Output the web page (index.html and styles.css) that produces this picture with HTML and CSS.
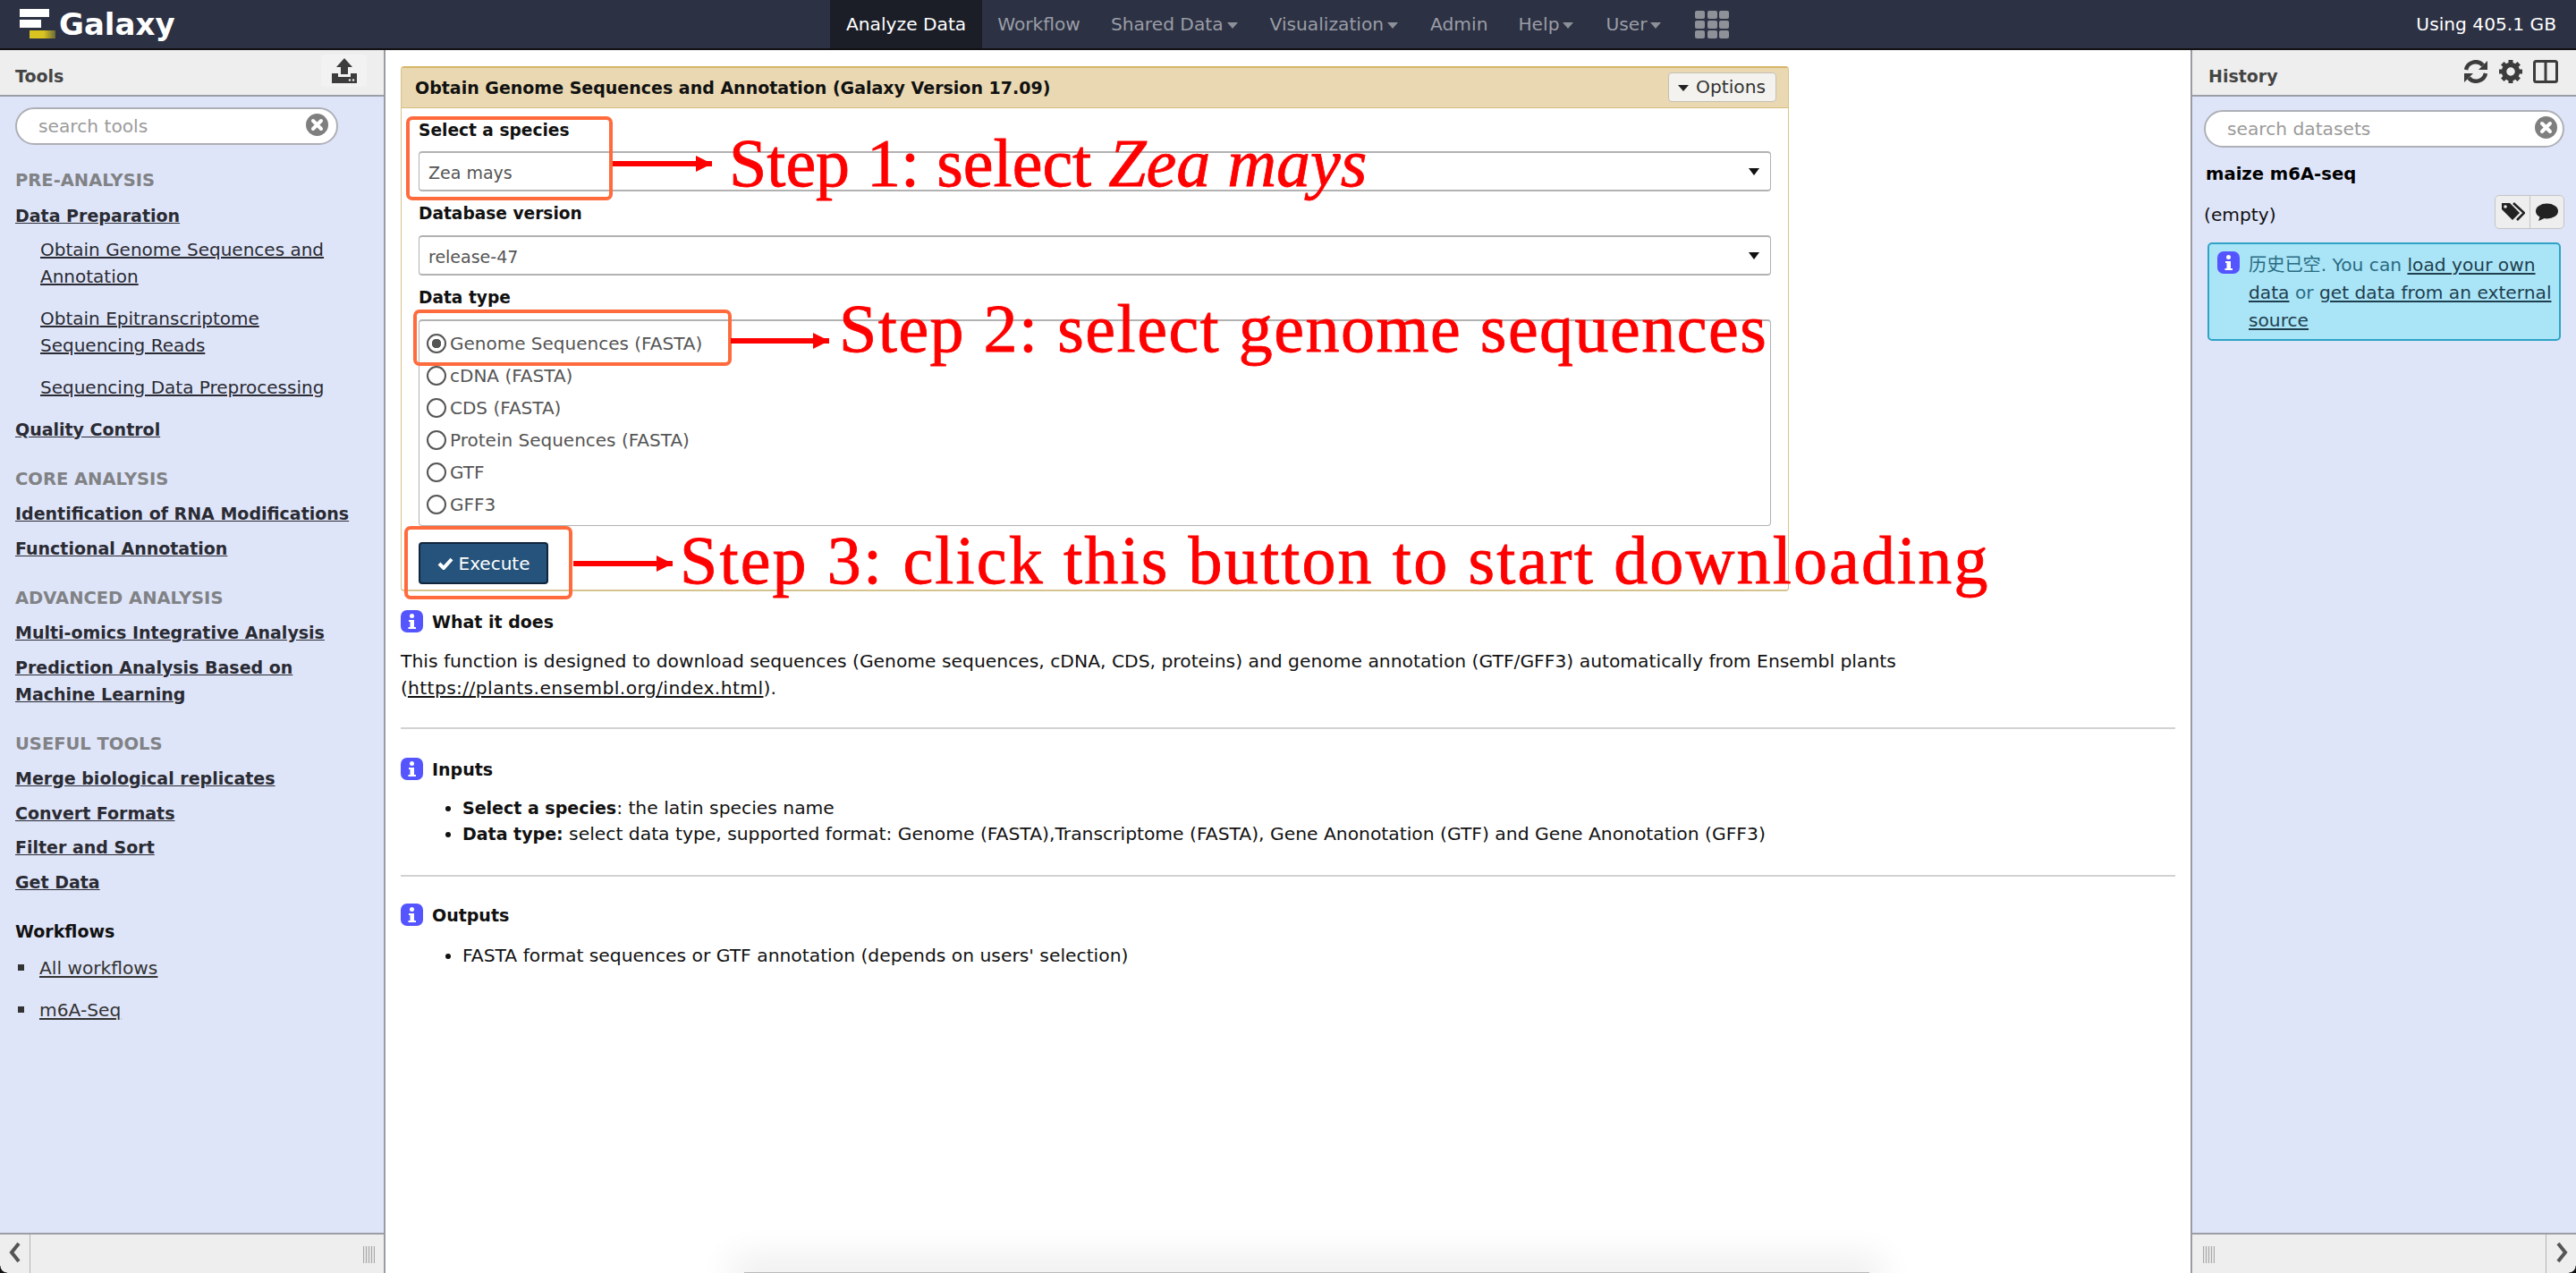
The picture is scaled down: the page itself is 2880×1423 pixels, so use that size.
FILE: index.html
```html
<!DOCTYPE html>
<html lang="en">
<head>
<meta charset="utf-8">
<title>Galaxy</title>
<link rel="stylesheet" href="styles.css">
</head>
<body>
<header class="masthead">
  <a class="brand">
    <span class="logo"><i class="bar b1"></i><i class="bar b2"></i><i class="bar b3"></i></span>
    <span class="brand-name">Galaxy</span>
  </a>
  <nav class="nav">
    <a class="tab active">Analyze Data</a>
    <a class="tab">Workflow</a>
    <a class="tab">Shared Data<i class="caret"></i></a>
    <a class="tab">Visualization<i class="caret"></i></a>
    <a class="tab">Admin</a>
    <a class="tab">Help<i class="caret"></i></a>
    <a class="tab">User<i class="caret"></i></a>
    <span class="apps"><i></i><i></i><i></i><i></i><i></i><i></i><i></i><i></i><i></i></span>
  </nav>
  <div class="quota">Using 405.1 GB</div>
</header>

<main class="layout">
  <aside class="panel panel-left">
    <div class="panel-head">
      <span class="panel-title">Tools</span>
      <span class="upload-btn">
        <svg width="30" height="28" viewBox="0 0 30 28"><path d="M15 0 L24 10 H19 V18 H11 V10 H6 Z M1 17 H8 V21 H22 V17 H29 Q29 17 29 19 V28 H1 Z" fill="#3c3c3c"/><circle cx="21" cy="24.5" r="1.2" fill="#eee"/><circle cx="25" cy="24.5" r="1.2" fill="#eee"/></svg>
      </span>
    </div>
    <div class="panel-body tools">
      <div class="search search-tools"><span>search tools</span>
        <svg class="clear" width="25" height="25" viewBox="0 0 25 25"><circle cx="12.5" cy="12.5" r="12.5" fill="#7f7f7f"/><path d="M8 8 L17 17 M17 8 L8 17" stroke="#fff" stroke-width="4" stroke-linecap="round"/></svg>
      </div>
      <h3 class="label first">PRE-ANALYSIS</h3>
      <a class="section">Data Preparation</a>
      <div class="subs">
        <a class="sub">Obtain Genome Sequences and Annotation</a>
        <a class="sub">Obtain Epitranscriptome Sequencing Reads</a>
        <a class="sub">Sequencing Data Preprocessing</a>
      </div>
      <a class="section">Quality Control</a>
      <h3 class="label">CORE ANALYSIS</h3>
      <a class="section">Identification of RNA Modifications</a>
      <a class="section">Functional Annotation</a>
      <h3 class="label">ADVANCED ANALYSIS</h3>
      <a class="section">Multi-omics Integrative Analysis</a>
      <a class="section">Prediction Analysis Based on Machine Learning</a>
      <h3 class="label">USEFUL TOOLS</h3>
      <a class="section">Merge biological replicates</a>
      <a class="section">Convert Formats</a>
      <a class="section">Filter and Sort</a>
      <a class="section">Get Data</a>
      <h3 class="label workflows">Workflows</h3>
      <ul class="wf">
        <li><a>All workflows</a></li>
        <li><a>m6A-Seq</a></li>
      </ul>
    </div>
    <div class="panel-foot">
      <span class="collapse collapse-l"><svg width="14" height="24" viewBox="0 0 14 24"><path d="M11 2 L3 12 L11 22" fill="none" stroke="#555" stroke-width="4"/></svg></span>
      <span class="grip"></span>
    </div>
  </aside>

  <section class="center">
    <div class="form">
      <div class="form-head">
        <span class="form-title">Obtain Genome Sequences and Annotation (Galaxy Version 17.09)</span>
        <span class="options"><i class="caret dark"></i>Options</span>
      </div>
      <div class="form-body">
        <div class="field-label">Select a species</div>
        <div class="select first-select"><span>Zea mays</span><i class="sel-arrow"></i></div>
        <div class="field-label">Database version</div>
        <div class="select"><span>release-47</span><i class="sel-arrow"></i></div>
        <div class="field-label">Data type</div>
        <div class="radios">
          <div class="radio on"><i></i>Genome Sequences (FASTA)</div>
          <div class="radio"><i></i>cDNA (FASTA)</div>
          <div class="radio"><i></i>CDS (FASTA)</div>
          <div class="radio"><i></i>Protein Sequences (FASTA)</div>
          <div class="radio"><i></i>GTF</div>
          <div class="radio"><i></i>GFF3</div>
        </div>
        <div class="execute">
          <svg width="18" height="15" viewBox="0 0 18 15"><path d="M2 8 L7 13 L16 3" fill="none" stroke="#fff" stroke-width="4"/></svg>Execute
        </div>
      </div>
    </div>

    <div class="help">
      <h4 class="help-h"><svg class="info" viewBox="0 0 25 25"><rect width="25" height="25" rx="7" fill="#5555ff"/><circle cx="12.5" cy="6.5" r="2.5" fill="#fff"/><path d="M9 11 H15 V19 H17 V21 H8.500 V19 H10.500 V13 H9 Z" fill="#fff"/></svg>What it does</h4>
      <p class="help-p">This function is designed to download sequences (Genome sequences, cDNA, CDS, proteins) and genome annotation (GTF/GFF3) automatically from Ensembl plants<br>(<a>https://plants.ensembl.org/index.html</a>).</p>
      <hr class="rule rule-a">
      <h4 class="help-h h-inputs"><svg class="info" viewBox="0 0 25 25"><rect width="25" height="25" rx="7" fill="#5555ff"/><circle cx="12.5" cy="6.5" r="2.5" fill="#fff"/><path d="M9 11 H15 V19 H17 V21 H8.500 V19 H10.500 V13 H9 Z" fill="#fff"/></svg>Inputs</h4>
      <ul class="help-ul ul-inputs">
        <li><b>Select a species</b>: the latin species name</li>
        <li><b>Data type:</b> select data type, supported format: Genome (FASTA),Transcriptome (FASTA), Gene Anonotation (GTF) and Gene Anonotation (GFF3)</li>
      </ul>
      <hr class="rule rule-b">
      <h4 class="help-h h-outputs"><svg class="info" viewBox="0 0 25 25"><rect width="25" height="25" rx="7" fill="#5555ff"/><circle cx="12.5" cy="6.5" r="2.5" fill="#fff"/><path d="M9 11 H15 V19 H17 V21 H8.500 V19 H10.500 V13 H9 Z" fill="#fff"/></svg>Outputs</h4>
      <ul class="help-ul ul-outputs">
        <li>FASTA format sequences or GTF annotation (depends on users' selection)</li>
      </ul>
    </div>

    <div class="bottom-shadow"></div>

    <div class="mark box1"></div>
    <div class="mark box2"></div>
    <div class="mark box3"></div>
    <div class="arrow a1"></div>
    <div class="arrow a2"></div>
    <div class="arrow a3"></div>
    <div class="step s1">Step 1: select <em>Zea mays</em></div>
    <div class="step s2">Step 2: select genome sequences</div>
    <div class="step s3">Step 3: click this button to start downloading</div>
  </section>

  <aside class="panel panel-right">
    <div class="panel-head">
      <span class="panel-title">History</span>
      <span class="head-icons">
        <svg width="28" height="26" viewBox="0 0 28 26"><path d="M3 11 A11 11 0 0 1 22 6" fill="none" stroke="#3c3c3c" stroke-width="4.500"/><path d="M27 1 V11 H17 Z" fill="#3c3c3c"/><path d="M25 15 A11 11 0 0 1 6 20" fill="none" stroke="#3c3c3c" stroke-width="4.500"/><path d="M1 25 V15 H11 Z" fill="#3c3c3c"/></svg>
        <svg width="26" height="26" viewBox="0 0 26 26"><circle cx="13" cy="13" r="7.500" fill="none" stroke="#3c3c3c" stroke-width="5.500"/><path d="M13 0 V26 M0 13 H26 M3.800 3.800 L22.200 22.200 M22.200 3.800 L3.800 22.200" stroke="#3c3c3c" stroke-width="5" stroke-dasharray="5 16 5"/></svg>
        <svg width="28" height="26" viewBox="0 0 28 26"><rect x="1.500" y="1.500" width="25" height="23" rx="2" fill="none" stroke="#3c3c3c" stroke-width="3"/><path d="M14 1 V25" stroke="#3c3c3c" stroke-width="3"/></svg>
      </span>
    </div>
    <div class="panel-body history">
      <div class="search search-hist"><span>search datasets</span>
        <svg class="clear" width="25" height="25" viewBox="0 0 25 25"><circle cx="12.5" cy="12.5" r="12.5" fill="#7f7f7f"/><path d="M8 8 L17 17 M17 8 L8 17" stroke="#fff" stroke-width="4" stroke-linecap="round"/></svg>
      </div>
      <div class="hist-name">maize m6A-seq</div>
      <div class="hist-row">
        <span class="hist-empty">(empty)</span>
        <span class="btn-group">
          <span class="gbtn"><svg width="27" height="22" viewBox="0 0 27 22"><path d="M1 1 H10 L21 12 L13 20 L1 8 Z" fill="#222"/><path d="M14 1 L26 12 L18 20" fill="none" stroke="#222" stroke-width="2.500"/><circle cx="5" cy="5" r="1.800" fill="#eee"/></svg></span>
          <span class="gbtn"><svg width="25" height="21" viewBox="0 0 25 21"><ellipse cx="12.500" cy="9" rx="12.500" ry="8.500" fill="#222"/><path d="M5 14 L3 20 L12 16 Z" fill="#222"/></svg></span>
        </span>
      </div>
      <div class="message">
        <svg class="info" viewBox="0 0 25 25"><rect width="25" height="25" rx="7" fill="#5555ff"/><circle cx="12.5" cy="6.5" r="2.5" fill="#fff"/><path d="M9 11 H15 V19 H17 V21 H8.500 V19 H10.500 V13 H9 Z" fill="#fff"/></svg>
        <p>历史已空. You can <a>load your own data</a> or <a>get data from an external source</a></p>
      </div>
    </div>
    <div class="panel-foot foot-right">
      <span class="grip"></span>
      <span class="collapse collapse-r"><svg width="14" height="24" viewBox="0 0 14 24"><path d="M3 2 L11 12 L3 22" fill="none" stroke="#555" stroke-width="4"/></svg></span>
    </div>
  </aside>
</main>
<i class="corner corner-l"></i>
<i class="corner corner-r"></i>
</body>
</html>
```

FILE: styles.css
```css
* { box-sizing: border-box; }
html, body { margin: 0; height: 100%; overflow: hidden; }
body {
  display: flex;
  flex-direction: column;
  position: relative;
  font-family: "DejaVu Sans", "Noto Sans CJK SC", sans-serif;
  font-size: 20.2px;
  line-height: 30px;
  color: #111;
  background: #fff;
}
a { color: inherit; text-decoration: underline; }
i { font-style: normal; }

/* masthead */
.masthead {
  height: 56px;
  flex: none;
  background: #2c3143;
  border-bottom: 2px solid #111;
  display: flex;
  position: relative;
}
.brand { display: flex; align-items: center; padding-left: 22px; text-decoration: none; }
.logo { width: 44px; height: 34px; position: relative; display: block; }
.bar { position: absolute; display: block; height: 9px; }
.b1 { left: 0; top: 0; width: 33px; background: #fff; }
.b2 { left: 0; top: 12px; width: 24px; background: #fff; }
.b3 { left: 11px; top: 24px; width: 29px; background: linear-gradient(90deg, #d8c320 55%, #6a6a3a); }
.brand-name { font-size: 34px; font-weight: 700; color: #fff; line-height: 50px; }
.nav {
  position: absolute;
  left: 928px;
  top: 0;
  height: 54px;
  display: flex;
  align-items: center;
}
.tab {
  height: 54px;
  line-height: 52px;
  padding: 0 17px;
  color: #9a9da6;
  text-decoration: none;
  display: flex;
  align-items: center;
}
.tab.active { background: #1b1d27; color: #fff; padding: 0 18px; }
.caret {
  display: inline-block;
  width: 0; height: 0;
  margin: 3px 2px 0 4px;
  border-left: 6.5px solid transparent;
  border-right: 6.5px solid transparent;
  border-top: 7px solid #8e9099;
}
.caret.dark { border-top-color: #222; margin: 2px 8px 0 0; }
.apps {
  margin-left: 19px;
  display: grid;
  grid-template-columns: repeat(3, 11px);
  grid-auto-rows: 9px;
  gap: 2px 2.5px;
}
.apps i { background: #8f9199; border-radius: 2px; }
.quota { margin-left: auto; padding-right: 22px; color: #fff; line-height: 54px; }

/* layout */
.layout {
  flex: 1;
  min-height: 0;
  display: grid;
  grid-template-columns: 431px 1fr 431px;
}
.panel { display: flex; flex-direction: column; min-height: 0; background: #dfe5f9; }
.panel-left { border-right: 2px solid #9a9ca3; }
.panel-right { border-left: 2px solid #9a9ca3; }
.panel-head {
  height: 52px;
  flex: none;
  background: #eee;
  border-bottom: 2px solid #9c9ea5;
  display: flex;
  align-items: center;
  justify-content: space-between;
}
.panel-title { font-size: 19px; font-weight: 600; color: #444; line-height: 30px; margin-top: 8px; }
.panel-left .panel-title { margin-left: 17px; }
.panel-right .panel-title { margin-left: 18px; }
.upload-btn {
  width: 51px; height: 36px;
  margin-right: 19px; margin-top: -4px;
  background: #f2f2f2;
  border-radius: 4px;
  display: flex; align-items: center; justify-content: center;
}
.head-icons { display: flex; gap: 12px; margin-right: 20px; margin-top: -3px; }
.panel-body { flex: 1; min-height: 0; }
.panel-foot {
  height: 45px;
  flex: none;
  background: #eee;
  border-top: 2px solid #9c9ea5;
  display: flex;
  align-items: stretch;
  justify-content: space-between;
}
.collapse { width: 34px; display: flex; align-items: center; justify-content: center; padding-bottom: 4px; }
.collapse-l { border-right: 1px solid #b5b5b5; }
.collapse-r { border-left: 1px solid #b5b5b5; }
.grip {
  width: 13px; height: 19px;
  margin: 13px 10px 0 0;
  background: repeating-linear-gradient(90deg, #aaa 0 1px, #e4e4e4 1px 3px);
}
.foot-right .grip { margin: 13px 0 0 12px; }

/* search */
.search {
  height: 42px;
  background: #fff;
  border: 2px solid #aeb0b6;
  border-radius: 21px;
  color: #9b9b9b;
  display: flex;
  align-items: center;
  justify-content: space-between;
  line-height: 38px;
}
.search span { padding-left: 24px; }
.clear { margin-right: 9px; margin-top: -3px; }
.search-tools { width: 361px; margin: 12px 0 0 17px; }
.search-hist { margin: 15px 13px 0 13px; }
.search-hist .clear { margin-right: 6px; margin-top: -4px; }

/* tool list */
.tools { padding-left: 17px; }
.tools .search-tools { margin-left: 0; }
.label { margin: 26px 0 0; font-size: 19.5px; font-weight: 700; color: #808285; }
.label.first { margin-top: 25px; }
.section { display: block; font-size: 19px; font-weight: 700; color: #2a2b33; margin-top: 8.5px; padding-right: 20px; }
.subs { margin-bottom: 17px; }
.sub { display: block; margin: 8px 0 0 28px; color: #2a2b33; padding-right: 22px; font-size: 20px; }
.sub + .sub { margin-top: 17px; }
.label.workflows { font-size: 19px; color: #111; margin-top: 25px; }
.wf { margin: 11px 0 0; padding: 0; list-style: none; color: #333; }
.wf li { display: flex; align-items: center; }
.wf li::before { content: ""; width: 7px; height: 7px; margin: 0 17px 0 3px; background: #333; }
.wf li + li { margin-top: 17px; }

/* center */
.center { position: relative; padding: 18px 17px 0; background: #fff; overflow: hidden; }
.form { border: 1px solid #d9c38a; border-top: 2px solid #d6b566; border-bottom: 2px solid #d6c48e; border-radius: 4px; width: 1552px; height: 587px; }
.form-head {
  height: 45px;
  background: #e9d8b1;
  border-bottom: 1px solid #d6bd7d;
  display: flex;
  align-items: center;
  justify-content: space-between;
  padding: 0 13px 0 15px;
}
.form-title { font-size: 19px; font-weight: 700; color: #111; }
.options {
  height: 33px;
  padding: 0 11px 0 10px;
  background: #f3f2ee;
  border: 1px solid #c4c0b4;
  border-radius: 4px;
  display: flex; align-items: center;
  color: #333;
  margin-top: -2px;
}
.form-body { padding: 10px 19px 0; }
.field-label { font-size: 18.6px; font-weight: 700; line-height: 30px; margin-top: 10px; color: #111; }
.field-label:first-child { margin-top: 0; }
.select {
  height: 45px;
  margin-top: 9px;
  border: 1px solid #b2b2b2;
  border-top-width: 2px;
  border-bottom-width: 2px;
  border-radius: 4px;
  padding: 0 4px 0 10px;
  color: #555;
  display: flex;
  justify-content: space-between;
  align-items: center;
  font-size: 19px;
}
.first-select { margin-top: 8px; }
.select span { padding-top: 2px; }
.sel-arrow {
  width: 0; height: 0;
  margin-right: 8px;
  border-left: 6px solid transparent;
  border-right: 6px solid transparent;
  border-top: 8px solid #111;
}
.radios {
  height: 231px;
  margin-top: 9px;
  border: 1px solid #b2b2b2;
  border-top: 2px solid #b2b2b2;
  border-radius: 4px;
  padding: 7px 8px 0;
  font-size: 20px;
}
.radio { height: 36px; display: flex; align-items: center; color: #555; }
.radio i {
  width: 22px; height: 22px;
  border: 2px solid #555;
  border-radius: 50%;
  margin-right: 4px;
  flex: none;
}
.radio.on i { background: radial-gradient(circle, #555 0 5px, #fff 5.5px); }
.execute {
  width: 145px; height: 47px;
  margin-top: 18px;
  background: #25537b;
  border: 2px solid #11263c;
  border-radius: 4px;
  color: #fff;
  font-size: 20px;
  display: flex; align-items: center; justify-content: center;
  gap: 6px;
}

/* help */
.help { margin-top: 16px; color: #111; font-size: 20.3px; }
.help-h { margin: 0; font-size: 19px; font-weight: 700; display: flex; align-items: center; height: 34px; padding-top: 1px; }
.info { width: 25px; height: 25px; margin-right: 10px; flex: none; }
.help-p { margin: 13px 0 0; }
.rule { margin: 29px 0 0; border: 0; border-top: 2px solid #d2d2d2; }
.rule-b { margin-top: 31px; }
.h-inputs { margin-top: 27px; }
.h-outputs { margin-top: 25px; }
.help-ul { padding-left: 69px; line-height: 29px; }
.help-ul b { font-size: 19px; }
.ul-inputs { margin: 13px 0 0; }
.ul-outputs { margin: 15px 0 0; }
.help a { color: #111; letter-spacing: 0.4px; }
.bottom-shadow {
  position: absolute;
  left: 401px;
  bottom: -2px;
  width: 1258px;
  height: 3px;
  background: #bbb;
  box-shadow: 0 0 40px 14px rgba(0,0,0,.09);
}

/* annotations */
.mark { position: absolute; border: 4px solid #ff6b3d; border-radius: 7px; }
.box1 { left: 23px; top: 74px; width: 231px; height: 94px; }
.box2 { left: 31px; top: 290px; width: 356px; height: 63px; }
.box3 { left: 21px; top: 532px; width: 188px; height: 82px; }
.arrow { position: absolute; height: 6px; background: #f00; }
.arrow::after {
  content: "";
  position: absolute;
  right: 0; top: -6px;
  border-left: 18px solid #f00;
  border-top: 9px solid transparent;
  border-bottom: 9px solid transparent;
}
.a1 { left: 254px; top: 124px; width: 111px; }
.a2 { left: 386px; top: 322px; width: 110px; }
.a3 { left: 210px; top: 571px; width: 111px; }
.step {
  position: absolute;
  font-family: "Liberation Serif", serif;
  font-size: 76px;
  line-height: 90px;
  color: #f00;
  white-space: nowrap;
  -webkit-text-stroke: 0.8px #f00;
}
.s1 { left: 384px; top: 81px; }
.s2 { left: 507px; top: 266px; letter-spacing: 1.5px; }
.s3 { left: 329px; top: 525px; letter-spacing: 2.15px; }

/* history */
.hist-name { margin: 15px 0 0 15px; font-size: 19.6px; font-weight: 700; color: #000; }
.hist-row { display: flex; justify-content: space-between; align-items: center; margin: 8px 13px 0 13px; height: 38px; }
.hist-empty { color: #111; line-height: 30px; margin-top: 6px; }
.btn-group { display: flex; height: 38px; border: 1px solid #c2c4c8; border-radius: 5px; background: #eee; }
.gbtn { width: 38px; display: flex; align-items: center; justify-content: center; }
.gbtn + .gbtn { border-left: 1px solid #c2c4c8; }
.message {
  margin: 15px 17px 0 17px;
  height: 110px;
  background: #a9e4f7;
  border: 2px solid #2ea3c6;
  border-radius: 5px;
  padding: 8px 6px 0 9px;
  display: flex;
  color: #2a6b82;
}
.message p { margin: 0; line-height: 31px; }
.message a { color: #1f3f4e; }
.corner { position: absolute; bottom: 0; width: 8px; height: 8px; }
.corner-l { left: 0; background: radial-gradient(circle at 100% 0, transparent 7px, #111 8px); }
.corner-r { right: 0; background: radial-gradient(circle at 0 0, transparent 7px, #111 8px); }
```
